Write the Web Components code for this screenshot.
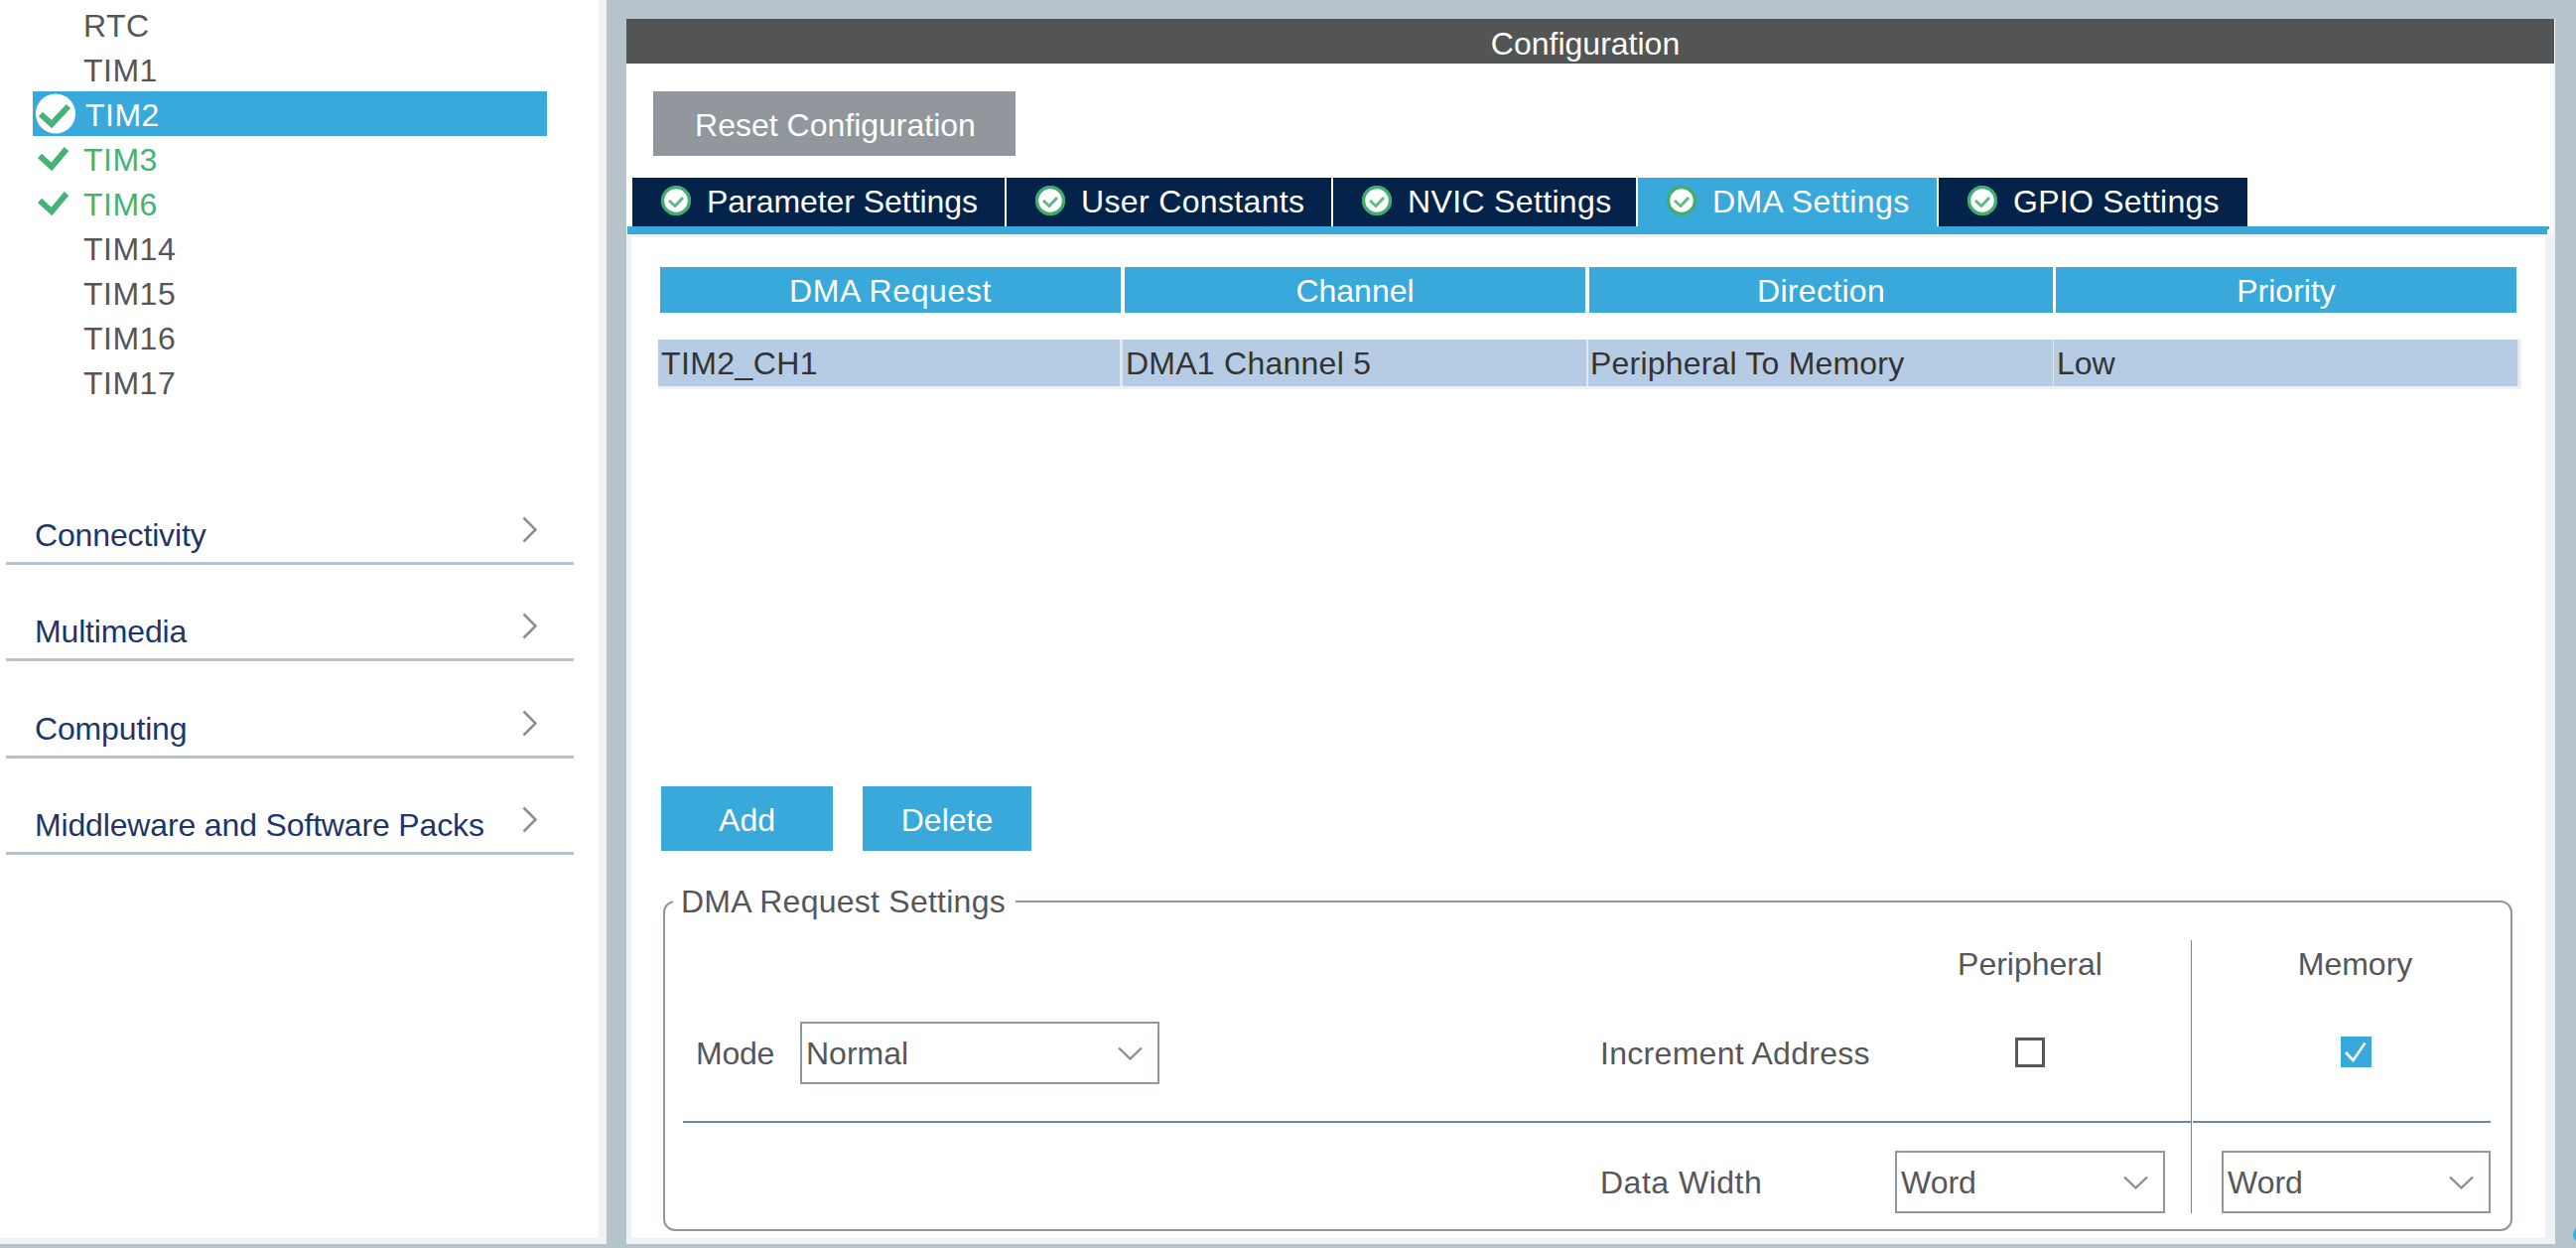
<!DOCTYPE html>
<html>
<head>
<meta charset="utf-8">
<title>DMA Settings</title>
<style>
  html, body { margin: 0; height: 100%; overflow: hidden; background: #b7c3ca; }
</style>
</head>
<body>
<cube-app>
  <side-bar slot="side">
    <side-item>RTC</side-item>
    <side-item>TIM1</side-item>
    <side-item state="active">TIM2</side-item>
    <side-item state="ok">TIM3</side-item>
    <side-item state="ok">TIM6</side-item>
    <side-item>TIM14</side-item>
    <side-item>TIM15</side-item>
    <side-item>TIM16</side-item>
    <side-item>TIM17</side-item>
    <side-category first>Connectivity</side-category>
    <side-category>Multimedia</side-category>
    <side-category>Computing</side-category>
    <side-category>Middleware and Software Packs</side-category>
  </side-bar>
  <config-panel slot="main">
    <tab-bar slot="tabs">
      <tab-item w="375" ls="-0.05">Parameter Settings</tab-item>
      <tab-item w="327" ls="0.35">User Constants</tab-item>
      <tab-item w="305" ls="0.35">NVIC Settings</tab-item>
      <tab-item w="301" ls="0.4" active>DMA Settings</tab-item>
      <tab-item w="311" ls="0.25">GPIO Settings</tab-item>
    </tab-bar>
    <dma-table></dma-table>
    <action-buttons></action-buttons>
    <dma-settings></dma-settings>
  </config-panel>
</cube-app>

<script>
const FONT = '"Liberation Sans", Arial, sans-serif';

class CubeApp extends HTMLElement {
  connectedCallback() {
    this.attachShadow({mode: 'open'}).innerHTML = `
      <style>
        :host {
          display: flex;
          position: relative;
          height: 1253px;
          font: 32px/40px ${FONT};
          color: #55565a;
        }
        .main { display: block; width: 1943px; margin: 19px 0 0 20px; }
        .dot {
          position: absolute;
          left: 2592px;
          top: 1235px;
          width: 17px;
          height: 17px;
          border-radius: 50%;
          background: #39a9dc;
        }
      </style>
      <slot name="side"></slot>
      <div class="main"><slot name="main"></slot></div>
      <span class="dot"></span>
    `;
  }
}
customElements.define('cube-app', CubeApp);

class SideBar extends HTMLElement {
  connectedCallback() {
    this.attachShadow({mode: 'open'}).innerHTML = `
      <style>
        :host {
          display: block;
          box-sizing: border-box;
          width: 611px;
          height: 1253px;
          padding-top: 2px;
          background: #fff;
          border-right: 8px solid #eff1f3;
          border-bottom: 6px solid #eff1f3;
        }
      </style>
      <slot></slot>
    `;
  }
}
customElements.define('side-bar', SideBar);

class SideItem extends HTMLElement {
  connectedCallback() {
    const state = this.getAttribute('state');
    let icon = '';
    if (state === 'active') {
      icon = `<circle cx="23" cy="22.5" r="20" fill="#fff"/>
        <path d="M8 23 L19 33 L36 15" fill="none" stroke="#46b27a" stroke-width="6"/>`;
    } else if (state === 'ok') {
      icon = `<path d="M7 20 L19 31 L34 13" fill="none" stroke="#46b27a" stroke-width="6"/>`;
    }
    this.attachShadow({mode: 'open'}).innerHTML = `
      <style>
        :host {
          display: flex;
          align-items: center;
          width: 518px;
          height: 45px;
          margin-left: 33px;
          letter-spacing: 0.5px;
        }
        :host([state="active"]) { background: #39a9dc; color: #fff; }
        :host([state="ok"]) { color: #41b374; }
        svg { flex: none; width: 51px; height: 45px; filter: blur(0.7px); }
        :host([state="active"]) svg { margin-right: 2px; }
        span { padding-top: 3px; line-height: 42px; }
      </style>
      <svg viewBox="0 0 51 45">${icon}</svg>
      <span><slot></slot></span>
    `;
  }
}
customElements.define('side-item', SideItem);

class SideCategory extends HTMLElement {
  connectedCallback() {
    this.attachShadow({mode: 'open'}).innerHTML = `
      <style>
        :host {
          display: flex;
          align-items: flex-end;
          box-sizing: border-box;
          width: 572px;
          height: 97.4px;
          margin-left: 6px;
          padding: 0 37px 7px 29px;
          border-bottom: 3px solid #b7c3ca;
          color: #1f3568;
          letter-spacing: -0.15px;
        }
        :host([first]) { margin-top: 64.6px; }
        span { flex: 1; }
        svg { flex: none; width: 15px; height: 27px; margin-bottom: 12px; }
      </style>
      <span><slot></slot></span>
      <svg viewBox="0 0 15 27"><path d="M1.5 1.5 L13.5 13.5 L1.5 25.5" fill="none" stroke="#8a8f93" stroke-width="2.6"/></svg>
    `;
  }
}
customElements.define('side-category', SideCategory);

class ConfigPanel extends HTMLElement {
  connectedCallback() {
    this.attachShadow({mode: 'open'}).innerHTML = `
      <style>
        :host {
          display: flex;
          flex-direction: column;
          height: 1234px;
          background: #fff;
        }
        .title {
          flex: none;
          box-sizing: border-box;
          height: 45px;
          padding: 3px 10px 0 0;
          width: 1942px;
          background: #535554;
          color: #fff;
          line-height: 44px;
          text-align: center;
        }
        .upper { flex: none; border-right: 2px solid #eff1f3; }
        .reset {
          box-sizing: border-box;
          width: 365px;
          height: 65px;
          margin: 28px 0 22px 27px;
          padding-left: 2px;
          background: #91979c;
          color: #fff;
          line-height: 68px;
          text-align: center;
        }
        .tabs { display: block; margin-left: 6px; height: 49px; }
        .strip-top { height: 3px; width: 1936px; margin-left: 1px; background: #39a9dc; }
        .strip-low { height: 5px; width: 1934px; margin-left: 1px; background: #39a9dc; }
        .body {
          flex: 1;
          min-height: 0;
          border: solid #eff1f3;
          border-width: 3px 10px 6px 5px;
          background: #fff;
        }
      </style>
      <div class="title">Configuration</div>
      <div class="upper">
        <div class="reset">Reset Configuration</div>
        <div class="tabs"><slot name="tabs"></slot></div>
        <div class="strip-top"></div>
        <div class="strip-low"></div>
      </div>
      <div class="body"><slot></slot></div>
    `;
  }
}
customElements.define('config-panel', ConfigPanel);

class TabBar extends HTMLElement {
  connectedCallback() {
    this.attachShadow({mode: 'open'}).innerHTML = `
      <style>
        :host { display: flex; gap: 2px; height: 49px; }
      </style>
      <slot></slot>
    `;
  }
}
customElements.define('tab-bar', TabBar);

class TabItem extends HTMLElement {
  connectedCallback() {
    this.attachShadow({mode: 'open'}).innerHTML = `
      <style>
        :host {
          display: flex;
          align-items: center;
          box-sizing: border-box;
          width: ${this.getAttribute('w')}px;
          height: 49px;
          padding: 0 0 4px 29px;
          gap: 16px;
          background: #03234b;
          color: #fff;
          white-space: nowrap;
          letter-spacing: ${this.getAttribute('ls')}px;
        }
        :host([active]) { background: #39a9dc; }
        svg { flex: none; width: 30px; height: 30px; filter: blur(0.7px); }
        span { padding-top: 3px; }
      </style>
      <svg viewBox="0 0 30 30">
        <circle cx="15" cy="15" r="13.5" fill="#fff" stroke="#3fae6e" stroke-width="3.5"/>
        <path d="M8 15 L14 20.5 L22 12" fill="none" stroke="#5dbb85" stroke-width="3"/>
      </svg>
      <span><slot></slot></span>
    `;
  }
}
customElements.define('tab-item', TabItem);

class DmaTable extends HTMLElement {
  connectedCallback() {
    const heads = [['DMA Request', 464, 4, 0.6], ['Channel', 464, 4, 0], ['Direction', 467, 3, 0.3], ['Priority', 464, 0, 0]];
    const cells = [['TIM2_CH1', 465, 3, 0.4, 3], ['DMA1 Channel 5', 467, 2, 0.25, 3], ['Peripheral To Memory', 468, 1, 0.2, 2], ['Low', 467, 0, 0, 3]];
    this.attachShadow({mode: 'open'}).innerHTML = `
      <style>
        :host { display: block; padding: 30px 0 0 0; color: #333; }
        .head, .row { display: flex; }
        .head { margin: 0 0 27px 29px; height: 46px; }
        .head div {
          background: #39a9dc;
          color: #fff;
          line-height: 49px;
          text-align: center;
        }
        .row {
          width: 1875px;
          margin-left: 27px;
          background: #dfe7f1;
          border-bottom: 3px solid #eff1f3;
          border-right: 2px solid #eff1f3;
        }
        .row div {
          box-sizing: border-box;
          height: 47px;
          background: #b6cce4;
          line-height: 49px;
        }
      </style>
      <div class="head">${heads.map(h => `<div style="width:${h[1]}px;margin-right:${h[2]}px;letter-spacing:${h[3]}px">${h[0]}</div>`).join('')}</div>
      <div class="row">${cells.map(c => `<div style="width:${c[1]}px;margin-right:${c[2]}px;letter-spacing:${c[3]}px;padding-left:${c[4]}px">${c[0]}</div>`).join('')}</div>
    `;
  }
}
customElements.define('dma-table', DmaTable);

class ActionButtons extends HTMLElement {
  connectedCallback() {
    this.attachShadow({mode: 'open'}).innerHTML = `
      <style>
        :host { display: flex; gap: 30px; padding: 400px 0 0 30px; }
        div {
          height: 65px;
          background: #39a9dc;
          color: #fff;
          line-height: 68px;
          text-align: center;
        }
      </style>
      <div style="width:173px">Add</div>
      <div style="width:170px">Delete</div>
    `;
  }
}
customElements.define('action-buttons', ActionButtons);

class ComboBox extends HTMLElement {
  connectedCallback() {
    this.attachShadow({mode: 'open'}).innerHTML = `
      <style>
        :host {
          display: flex;
          align-items: center;
          justify-content: space-between;
          box-sizing: border-box;
          height: 63px;
          padding: 0 15px 0 4px;
          border: 2px solid #91979c;
        }
        svg { width: 25px; height: 14px; }
      </style>
      <span><slot></slot></span>
      <svg viewBox="0 0 25 14"><path d="M1 1.5 L12.5 12.5 L24 1.5" fill="none" stroke="#8a8f93" stroke-width="2.4"/></svg>
    `;
  }
}
customElements.define('combo-box', ComboBox);

class CheckMark extends HTMLElement {
  connectedCallback() {
    this.attachShadow({mode: 'open'}).innerHTML = `
      <style>
        :host {
          display: block;
          box-sizing: border-box;
          width: 30px;
          height: 30px;
          border: 3px solid #58595b;
        }
        :host([checked]) { width: 31px; height: 31px; border: 0; background: #39a9dc; }
        svg { display: block; width: 31px; height: 31px; }
      </style>
      ${this.hasAttribute('checked') ? '<svg viewBox="0 0 31 31"><path d="M5 16 L12.5 24 L24.5 6.5" fill="none" stroke="#fff" stroke-width="2.6"/></svg>' : ''}
    `;
  }
}
customElements.define('check-mark', CheckMark);

class DmaSettings extends HTMLElement {
  connectedCallback() {
    this.attachShadow({mode: 'open'}).innerHTML = `
      <style>
        :host { display: block; margin: 33px 0 0 32px; width: 1863px; }
        fieldset {
          box-sizing: border-box;
          margin: 0;
          padding: 0 0 16px 18px;
          border: 2px solid #91979c;
          border-radius: 12px;
        }
        legend {
          margin-left: -10px;
          padding: 0 10px 0 8px;
          line-height: 36px;
          letter-spacing: 0.25px;
        }
        .grid {
          display: grid;
          margin-top: 21px;
          grid-template-columns: 925px 296px 272px 26px 302px;
          grid-template-rows: 82px 63px 37px 2px 28px 63px;
        }
        .mode { grid-area: 2 / 1; display: flex; align-items: center; padding-left: 13px; }
        .mode span { width: 105px; letter-spacing: -0.25px; }
        .mode combo-box { width: 362px; }
        .label { display: flex; align-items: center; }
        .head { height: 50px; line-height: 48px; text-align: center; }
        .per { grid-column: 3; }
        .mem { grid-column: 5; justify-self: end; width: 271px; }
        .center { display: flex; align-items: center; justify-content: center; }
        .line { grid-row: 4; background: #6a85bd; }
        .divider { grid-column: 5; grid-row: 1 / 7; border-left: 1px solid #6a85bd; }
      </style>
      <fieldset>
        <legend>DMA Request Settings</legend>
        <div class="grid">
          <div class="divider"></div>
          <div class="head per" style="grid-row:1">Peripheral</div>
          <div class="head mem" style="grid-row:1;padding-right:2px;box-sizing:border-box">Memory</div>
          <div class="mode"><span>Mode</span><combo-box>Normal</combo-box></div>
          <div class="label" style="grid-area:2/2;letter-spacing:0.3px;margin-left:-1px">Increment Address</div>
          <div class="center per" style="grid-row:2;margin-top:-2px"><check-mark></check-mark></div>
          <div class="center mem" style="grid-row:2;margin-top:-2px"><check-mark checked></check-mark></div>
          <div class="line" style="grid-column:1/5"></div>
          <div class="line" style="grid-column:5;margin-left:2px"></div>
          <div class="label" style="grid-area:6/2;letter-spacing:0.5px;margin-left:-1px">Data Width</div>
          <combo-box class="per" style="grid-row:6">Word</combo-box>
          <combo-box class="mem" style="grid-row:6">Word</combo-box>
        </div>
      </fieldset>
    `;
  }
}
customElements.define('dma-settings', DmaSettings);
</script>
</body>
</html>
